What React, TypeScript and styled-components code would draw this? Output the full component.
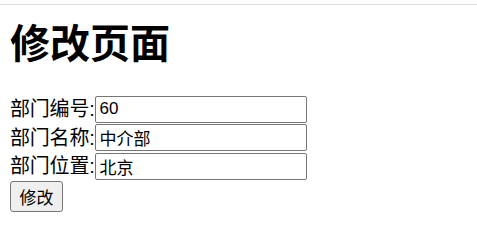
import styled, { createGlobalStyle } from 'styled-components';

const GlobalStyle = createGlobalStyle`
    body {
        margin: 0;
        background: #ffffff;
        color: #000000;
        font-family: "Liberation Sans", "Noto Sans CJK SC", sans-serif;
    }
`;

const TopLine = styled.div`
    margin-top: 4px;
    height: 1px;
    background: #dddddd;
`;

const Page = styled.div`
    padding: 0 10px;
`;

const Title = styled.h1`
    margin: 13px 0 0;
    font-size: 40px;
    line-height: 53px;
    font-weight: 700;
`;

const Form = styled.form`
    margin-top: 24px;
    display: flex;
    flex-direction: column;
    align-items: flex-start;
`;

const Row = styled.div`
    display: flex;
    align-items: center;
    height: 28.5px;
`;

const Label = styled.label`
    font-size: 20px;
    line-height: 28px;
    letter-spacing: -0.2px;
`;

const Field = styled.input`
    box-sizing: border-box;
    width: 212px;
    height: 27px;
    margin: 0;
    padding: 1px 4px;
    border: 1px solid #767676;
    border-radius: 2px;
    font-family: "Liberation Sans", "Noto Sans CJK SC", sans-serif;
    font-size: 17px;
    color: #000000;
    background: #ffffff;
`;

const Submit = styled.button`
    box-sizing: border-box;
    margin-top: 0.5px;
    width: 53px;
    height: 31px;
    padding: 0;
    border: 1px solid #767676;
    border-radius: 3px;
    background: #efefef;
    font-family: "Liberation Sans", "Noto Sans CJK SC", sans-serif;
    font-size: 17px;
    color: #000000;
`;

const fields = [
    { id: 'deptno', label: '部门编号:', value: '60' },
    { id: 'dname', label: '部门名称:', value: '中介部' },
    { id: 'loc', label: '部门位置:', value: '北京' },
];

export default function App() {
    return (
        <>
            <GlobalStyle />
            <TopLine />
            <Page>
                <Title>修改页面</Title>
                <Form onSubmit={(e) => e.preventDefault()}>
                    {fields.map((f) => (
                        <Row key={f.id}>
                            <Label htmlFor={f.id}>{f.label}</Label>
                            <Field id={f.id} name={f.id} defaultValue={f.value} />
                        </Row>
                    ))}
                    <Submit type="submit">修改</Submit>
                </Form>
            </Page>
        </>
    );
}
